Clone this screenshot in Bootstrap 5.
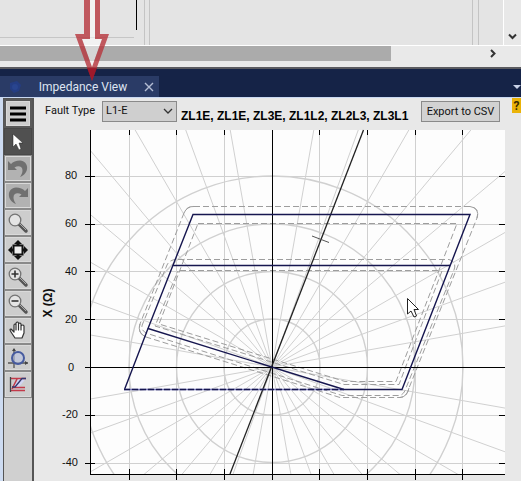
<!DOCTYPE html>
<html lang="en">
<head>
<meta charset="utf-8">
<meta name="viewport" content="width=device-width, initial-scale=1">
<title>Impedance View</title>
<link href="https://cdn.jsdelivr.net/npm/bootstrap@5.3.0/dist/css/bootstrap.min.css" rel="stylesheet">
<style>
body{background:#e8e8e8;color:#111;font:12px/16px Roboto,"Noto Sans",sans-serif;overflow:hidden}
.upper{height:46px;background:#e4e4e4;border-bottom:1px solid #fff}
.group-a{width:134px;height:38px;border-bottom:1px solid #c6c6c6}
.caret-line{width:3px;height:30px;border-right:1px solid #000}
.gutter-a{width:6px;margin-left:7px;border:solid #c4c4c4;border-width:0 1px}
.gutter-b{width:7px;margin-right:24px;border:solid #c4c4c4;border-width:0 1px}
.vscroll{width:18px;background:#e8e8e8;border-left:1px solid #fff}
.plain{background:none;border:0;padding:0;display:flex;align-items:center;justify-content:center}
.hscroll{height:21px;background:#e9e9e9}
.thumb{width:75%;height:15px;background:#ababab}
.hscroll button{height:15px}
.tabs{height:30px;background:#152347;border-top:2px solid #5b5b60}
.tabs .tab{height:21px;width:159px;background:#2a3b66;color:#dfe5f2;padding-left:7px}
.tab a{color:#dfe5f2;text-decoration:none;font-size:12px}
.frame{border-top:1px solid #c9d8f2;border-left:3px solid #cddbf1}
.tools{width:31px;background:#d0d0d0;border:1px solid #555;border-width:1px 2px 0 1px}
.tools button{height:27px;width:28px;background:#cdcdcd;border:1px solid #8a8a8a;box-shadow:inset 0 0 0 1px #dadada}
.tools .menu{height:29px;border:2px solid #5a5a5a}
.tools .on{background:#505050;border-color:#484848;box-shadow:none}
.tools .off{background:#b2b2b2}
.bar{height:27px;padding:3px 0 3px 11px}
.fault-label{font-size:11px;width:49px}
.pick{width:75px;height:21px;padding:0 0 1px 3px;font:11px/16px Roboto,"Noto Sans",sans-serif;border:1px solid #8a8a8a;background:#cfcfcf;appearance:none;color:#111}
.pick-wrap{position:relative;margin-left:8px;height:21px}
.pick-wrap svg{position:absolute;right:4px;top:7px;pointer-events:none}
.loops{font:bold 12px/16px "Liberation Sans",Arial,sans-serif;color:#000;margin-left:4px;padding-top:7px}
.export{width:79px;height:21px;border:1px solid #8a8a8a;background:#d2d2d2;color:#111;font-size:11px;line-height:16px}
.help{width:9px;height:15px;background:#eab308;color:#3a2c00;font-weight:700;overflow:hidden;margin-top:-3px;margin-left:12px}
.arrow{position:absolute;left:75px;top:0;z-index:2;pointer-events:none}
.plot{display:block;width:100%;height:auto}
.plot text{font:11px "Liberation Sans",Arial,sans-serif;fill:#111;text-anchor:middle}
.plot .axis-name{font-weight:700;font-size:12px}
</style>
<script src="https://cdn.jsdelivr.net/npm/bootstrap@5.3.0/dist/js/bootstrap.bundle.min.js"></script>
</head>
<body class="min-vh-100 d-flex flex-column">
<svg class="arrow" width="34" height="82" viewBox="75 0 34 82" aria-hidden="true"><path d="M90 0V39H82L92 67L102 39H95V0Z" fill="#fff" opacity=".5"/><path fill-rule="evenodd" d="M84 0V34H75L92 81L109 34H100V0H95V39H102L92 67L82 39H90V0Z" fill="#b6343c" opacity=".8"/><path d="M87 68H97L92 81Z" fill="#a01024" opacity=".7"/></svg>

<div class="upper d-flex flex-shrink-0">
  <div class="group-a flex-shrink-0"></div><div class="caret-line"></div><div class="gutter-a"></div>
  <div class="gutter-b ms-auto"></div>
  <div class="vscroll d-flex align-items-end justify-content-center pb-1"><button class="plain" aria-label="Scroll down"><svg width="9" height="9" viewBox="0 0 9 9"><path d="M1 2.500L4.500 6L8 2.500" fill="none" stroke="#333" stroke-width="2"/></svg></button></div>
</div>
<div class="hscroll d-flex flex-shrink-0"><div class="thumb"></div><button class="plain ms-auto me-4" aria-label="Scroll right"><svg width="8" height="9" viewBox="0 0 8 9"><path d="M2 1L5.500 4.500L2 8" fill="none" stroke="#333" stroke-width="2"/></svg></button></div>

<div class="tabs d-flex align-items-end flex-shrink-0">
  <div class="tab d-flex align-items-center"><svg width="16" height="16" viewBox="0 0 16 16" class="me-auto"><path d="M3 4L10 2L14 6L12 12L7 14L3 10Z" fill="#243d83"/><circle cx="8" cy="8" r="3" fill="#29458f"/></svg><a href="#">Impedance View</a><button class="plain ms-auto me-1" aria-label="Close tab"><svg width="12" height="12" viewBox="0 0 12 12"><path d="M2 2L10 10M10 2L2 10" stroke="#b4bdd4" stroke-width="1.400"/></svg></button></div>
  <button class="plain ms-auto pb-2" aria-label="Tab list"><svg width="8" height="4" viewBox="0 0 8 4"><path d="M0 0H8L4 4Z" fill="#c9d2e8"/></svg></button>
</div>

<main class="frame d-flex flex-grow-1">
  <div class="tools d-flex flex-column flex-shrink-0">
    <button class="plain menu" aria-label="Menu"><svg width="18" height="16" viewBox="0 0 18 16"><path d="M1 2H17M1 8H17M1 14H17" stroke="#000" stroke-width="3"/></svg></button>
    <button class="plain on" aria-label="Select"><svg width="14" height="18" viewBox="0 0 14 18"><path d="M2 1V14L5 11L8 17L10 16L8 10H12Z" fill="#fff" stroke="#222" stroke-width=".5"/></svg></button>
    <button class="plain off" aria-label="Undo"><svg width="22" height="21" viewBox="0 0 22 21"><path d="M1 3V12H10L7.500 9.500C13 6 19 10 13 19C23 15 22 3 13 2.500Q7 2.500 4 6Z" fill="#707070"/></svg></button>
    <button class="plain off" aria-label="Redo"><svg width="22" height="21" viewBox="0 0 22 21"><path d="M21 3V12H12L14.500 9.500C9 6 3 10 9 19C-1 15 0 3 9 2.500Q15 2.500 18 6Z" fill="#707070"/></svg></button>
    <button class="plain" aria-label="Zoom"><svg width="22" height="22" viewBox="0 0 22 22"><path d="M12 12L19 19" stroke="#555" stroke-width="3.500" stroke-linecap="round"/><path d="M13 12L19 18" stroke="#aaa"/><circle cx="8" cy="8" r="5.800" fill="#e4e4e4" stroke="#747474" stroke-width="1.300"/></svg></button>
    <button class="plain" aria-label="Zoom to fit"><svg width="22" height="22" viewBox="0 0 22 22"><path d="M6.500 6.500H15.500V15.500H6.500Z" fill="#eee" stroke="#111" stroke-width="2"/><path d="M11 1L15 5H12.500V6H9.500V5H7ZM11 21L15 17H12.500V16H9.500V17H7ZM1 11L5 7V9.500H6V12.500H5V15ZM21 11L17 7V9.500H16V12.500H17V15Z" fill="#111"/></svg></button>
    <button class="plain" aria-label="Zoom in"><svg width="22" height="22" viewBox="0 0 22 22"><path d="M12 12L19 19" stroke="#555" stroke-width="3.500" stroke-linecap="round"/><path d="M13 12L19 18" stroke="#aaa"/><circle cx="8" cy="8" r="5.800" fill="#e4e4e4" stroke="#747474" stroke-width="1.300"/><path d="M4.500 8H11.500M8 4.500V11.500" stroke="#333" stroke-width="1.600"/></svg></button>
    <button class="plain" aria-label="Zoom out"><svg width="22" height="22" viewBox="0 0 22 22"><path d="M12 12L19 19" stroke="#555" stroke-width="3.500" stroke-linecap="round"/><path d="M13 12L19 18" stroke="#aaa"/><circle cx="8" cy="8" r="5.800" fill="#e4e4e4" stroke="#747474" stroke-width="1.300"/><path d="M4.500 8H11.500" stroke="#333" stroke-width="1.600"/></svg></button>
    <button class="plain" aria-label="Pan"><svg width="18" height="19" viewBox="0 0 18 19"><path d="M6 17L2 11Q0 8 2 8L5 11V4Q6 2 7 4V9V2Q8.500 0 9.500 2V9V3Q11 1 12 3V9V5Q14 3 15 5V12L13 17Z" fill="#fff" stroke="#333" stroke-width="1.200" stroke-linejoin="round"/></svg></button>
    <button class="plain" aria-label="Impedance circle"><svg width="20" height="20" viewBox="0 0 20 20"><path d="M6 1V20M0 15H20" stroke="#555" stroke-width="1.300"/><path d="M6 0L8 3H4ZM20 15L17 13V17Z" fill="#444"/><circle cx="10" cy="10" r="6" fill="#bac4e2" fill-opacity=".6" stroke="#475b9f" stroke-width="2"/></svg></button>
    <button class="plain" aria-label="Distance zones"><svg width="18" height="17" viewBox="0 0 18 17"><path d="M10 2.500H17L10 11H4Z" fill="#d2d4f2"/><path d="M2 2.500H17M3 11.500H16M2 14.500H16" stroke="#c23a4a" stroke-width="1.300" fill="none"/><path d="M8 3L3 13" stroke="#c23a4a" stroke-width="1.500"/><path d="M17 2.500H13L6 11H3" stroke="#333b70" stroke-width="1.300" fill="none"/><path d="M1.500 1V16" stroke="#444" stroke-width="1.300"/></svg></button>
  </div>
  <div class="flex-grow-1">
    <div class="bar d-flex align-items-start">
      <label for="fault" class="fault-label pt-1 text-nowrap lh-1">Fault Type</label>
      <div class="pick-wrap"><select id="fault" class="pick rounded-0 d-block"><option>L1-E</option></select><svg width="10" height="7" viewBox="0 0 10 7"><path d="M1 1L5 5L9 1" fill="none" stroke="#333" stroke-width="1.300"/></svg></div>
      <div class="loops text-nowrap">ZL1E, ZL1E, ZL3E, ZL1L2, ZL2L3, ZL3L1</div>
      <button class="plain export ms-auto flex-shrink-0 text-nowrap">Export to CSV</button>
      <button class="plain help flex-shrink-0" aria-label="Help">?</button>
    </div>
    <svg class="plot" viewBox="34 125 487 356" role="img" aria-label="Impedance plane with distance zones">
      <defs><clipPath id="area"><path d="M90 130H505V475H90Z"/></clipPath></defs>
      <path d="M90 130H505V475H90Z" fill="#fdfdfd"/>
      <g clip-path="url(#area)" fill="none" stroke="#d0d0d0">
        <g id="rays"></g>
        <g stroke-width="1.400"><circle cx="272" cy="367" r="48"/><circle cx="272" cy="367" r="95.500"/><circle cx="272" cy="367" r="143"/><circle cx="272" cy="367" r="191"/></g>
        <path d="M129.500 130V475M176.500 130V475M224.500 130V475M319.500 130V475M367.500 130V475M415.500 130V475M462.500 130V475M90 176.500H505M90 224.500H505M90 271.500H505M90 319.500H505M90 415.500H505M90 463.500H505"/>
      </g>
      <g fill="none" stroke="#9d9d9d" stroke-dasharray="6 3">
        <path d="M194 206.500H470Q480 208 477 218L409 388Q407 397 400 397.500H340L146 337Q137 333 140 324L184 213Q187 206 194 206.500"/>
        <path d="M178 259.500H449Q457 262 454 270L406 388Q404 395 399 395.500H342L149 334Q139 331 143 323L167 265Q170 259 178 259.500"/>
        <path d="M198 223.500H457L396 381.500H345L159 324Z"/>
        <path d="M180 270.500H440M442 271L399 384.500H344L155 326L178 271"/>
      </g>
      <path d="M184 213Q187 206 194 206.500M470 206.500Q480 208 477 218M409 388Q407 397 400 397.500M146 337Q137 333 140 324" fill="none" stroke="#9d9d9d"/>
      <path d="M272.500 130V480M85 367.500H505M90.500 130V475M90 474.500H505M85 176.500H95M85 224.500H95M85 271.500H95M85 319.500H95M85 415.500H95M85 463.500H95M499 176.500H505M499 224.500H505M499 271.500H505M499 319.500H505M499 415.500H505M499 463.500H505M129.500 130V135M176.500 130V135M224.500 130V135M319.500 130V135M367.500 130V135M415.500 130V135M462.500 130V135M129.500 469V480M176.500 469V480M224.500 469V480M319.500 469V480M367.500 469V480M415.500 469V480M462.500 469V480" stroke="#000" fill="none"/>
      <path d="M363.500 130L230 474" stroke="#222" stroke-width="1.300"/><path d="M312 236L329 242.500" stroke="#555"/>
      <g fill="none" stroke="#16164f" stroke-width="1.400">
        <path d="M344 389.500L148 328.500L193 214.500H470L402 389.500H344M173 265.500H450M148 328.500L124.500 389.500"/>
        <path d="M124 389.500H344" stroke="#7777b8"/><path d="M124 389.500H344" stroke-dasharray="6 2"/>
      </g>
      <path d="M407.500 298.500V314L411 311L414 317L416.500 316L414 309.500H418.500Z" fill="#fff" stroke="#222"/>
      <text x="71" y="179">80</text><text x="71" y="227">60</text><text x="71" y="275">40</text><text x="71" y="323">20</text><text x="71" y="371">0</text><text x="70" y="418">-20</text><text x="70" y="466">-40</text>
      <text class="axis-name" transform="translate(52 303) rotate(-90)">X (Ω)</text>
    </svg>
  </div>
</main>
<script>
// Polar guide rays every ten degrees from the origin.
const rays = document.getElementById('rays');
for (let a = 10; a < 360; a += 10) {
  if (a % 90 === 0) continue;
  const ray = document.createElementNS('http://www.w3.org/2000/svg', 'line');
  const r = a * Math.PI / 180;
  ray.setAttribute('x1', 272);
  ray.setAttribute('y1', 367);
  ray.setAttribute('x2', 272 + 400 * Math.cos(r));
  ray.setAttribute('y2', 367 - 400 * Math.sin(r));
  rays.appendChild(ray);
}
</script>
</body>
</html>
